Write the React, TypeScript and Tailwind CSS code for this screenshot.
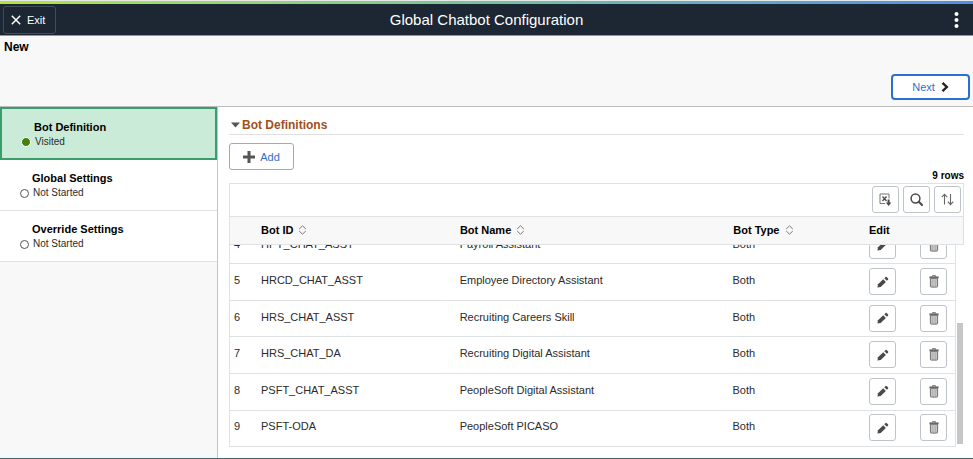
import React from "react";

const steps = [
  { title: "Bot Definition", status: "Visited", active: true },
  { title: "Global Settings", status: "Not Started", active: false },
  { title: "Override Settings", status: "Not Started", active: false },
];

const bots = [
  { row: 4, id: "HPY_CHAT_ASST", name: "Payroll Assistant", type: "Both" },
  { row: 5, id: "HRCD_CHAT_ASST", name: "Employee Directory Assistant", type: "Both" },
  { row: 6, id: "HRS_CHAT_ASST", name: "Recruiting Careers Skill", type: "Both" },
  { row: 7, id: "HRS_CHAT_DA", name: "Recruiting Digital Assistant", type: "Both" },
  { row: 8, id: "PSFT_CHAT_ASST", name: "PeopleSoft Digital Assistant", type: "Both" },
  { row: 9, id: "PSFT-ODA", name: "PeopleSoft PICASO", type: "Both" },
];

function PencilIcon() {
  return (
    <svg width="12" height="12" viewBox="0 0 12 12" fill="#4a4a4a" aria-hidden="true">
      <path d="M.4 11.600 1 8.300 6.200 3.200l2.700 2.700L3.700 11z" />
      <path d="M7.300 2.200 8.600.9q.5-.4 1 0l1.500 1.500q.4.5 0 1L9.900 4.800z" />
    </svg>
  );
}

function TrashIcon() {
  return (
    <svg width="10" height="13" viewBox="0 0 10 13" aria-hidden="true">
      <path d="M3.500 1.500V.7h3v.8" fill="none" stroke="#666" />
      <path d="M.4 1.400h9.200v1.900H.4z" fill="#666" />
      <path d="M1.400 3.300h7.200v8q0 .8-.8.8H2.200q-.8 0-.8-.8z" fill="#c4c4c4" stroke="#707070" />
      <path d="M3.700 4.500v6.500M6.300 4.500v6.500" stroke="#b0b0b0" />
    </svg>
  );
}

function DownloadIcon() {
  return (
    <svg width="13" height="14" viewBox="0 0 13 14" fill="none" aria-hidden="true">
      <path d="M6 10.500H1V1h9v4.500" stroke="#777" />
      <path d="m3.500 3.500 4 4.500M7.500 3.500l-4 4.500" stroke="#4a4a4a" strokeWidth="1.300" />
      <path d="M9.600 6.500v4" stroke="#4a4a4a" strokeWidth="2" />
      <path d="M6.800 9.500h5.600L9.600 13z" fill="#4a4a4a" />
    </svg>
  );
}

function SearchIcon() {
  return (
    <svg width="13" height="13" viewBox="0 0 13 13" fill="none" stroke="#4a4a4a" aria-hidden="true">
      <circle cx="5.500" cy="5.500" r="4.400" strokeWidth="1.500" />
      <path d="m8.800 8.800 3.200 3.200" strokeWidth="2" strokeLinecap="round" />
    </svg>
  );
}

function SortIcon() {
  return (
    <svg width="13" height="13" viewBox="0 0 13 13" fill="none" stroke="#666" strokeWidth="1.100" aria-hidden="true">
      <path d="M3.500 11.500V1.200M.8 4.200l2.700-3 2.700 3M9.500 1v10.500M6.800 8.700l2.700 3 2.700-3" />
    </svg>
  );
}

function HeaderSort({ label }: { label: string }) {
  return (
    <button type="button" className="flex items-center gap-[5px] font-bold">
      {label}
      <svg width="9" height="10" viewBox="0 0 9 10" fill="none" stroke="#777" aria-hidden="true">
        <path d="M1.200 4 4.500.8 7.800 4M1.200 6l3.300 3.200L7.800 6" />
      </svg>
    </button>
  );
}

function IconButton({ label, children }: { label: string; children: React.ReactNode }) {
  return (
    <button
      type="button"
      aria-label={label}
      className="flex size-[27px] items-center justify-center rounded-[3px] border border-[#bfc4ca] bg-white"
    >
      {children}
    </button>
  );
}

function Columns() {
  return (
    <colgroup>
      <col className="w-[31px]" />
      <col className="w-[27.4%]" />
      <col />
      <col className="w-[18.7%]" />
      <col className="w-[52px]" />
      <col className="w-[35px]" />
    </colgroup>
  );
}

export default function App() {
  return (
    <div className="flex min-h-screen flex-col border-b border-[#47636a] bg-white font-['Liberation_Sans',Arial,sans-serif] text-[11px] leading-4 text-[#2b2b2b]">
      <div className="h-1 border-t border-[#e8e8e8] bg-linear-to-r from-[#b0e636] via-[#76c39b] to-[#4a90ec]" />
      <header className="grid h-8 grid-cols-[1fr_auto_1fr] items-center border-b border-[#8f979d] bg-[#1c2733] px-[3px] text-white">
        <button
          type="button"
          className="flex h-7 w-[53px] items-center gap-[6px] rounded-[3px] border border-[#434d58] pl-[7px]"
        >
          <svg width="10" height="10" viewBox="0 0 10 10" stroke="white" strokeWidth="1.500" aria-hidden="true">
            <path d="m.8.8 8.400 8.400M9.200.8.8 9.200" />
          </svg>
          Exit
        </button>
        <h1 className="text-[15px] leading-5">Global Chatbot Configuration</h1>
        <button type="button" aria-label="Actions" className="justify-self-end px-[11px]">
          <svg width="5" height="16" viewBox="0 0 5 16" fill="white" aria-hidden="true">
            <circle cx="2.500" cy="2" r="2" />
            <circle cx="2.500" cy="8" r="2" />
            <circle cx="2.500" cy="14" r="2" />
          </svg>
        </button>
      </header>

      <div className="flex h-[71px] flex-col justify-between border-b border-[#bcbcbc] bg-[#f8f8f8] pt-[3px] pr-[3px] pb-[6px] pl-1">
        <h2 className="text-xs leading-4 font-bold text-black">New</h2>
        <button
          type="button"
          className="flex h-[26px] w-[79px] items-center justify-center gap-[6px] self-end rounded-[4px] border-2 border-[#2a70cf] bg-white text-[#2f6fca]"
        >
          Next
          <svg width="8" height="10" viewBox="0 0 8 10" fill="none" stroke="#222" strokeWidth="2.400" aria-hidden="true">
            <path d="m1.500.9 4.300 4.100-4.300 4.100" />
          </svg>
        </button>
      </div>

      <div className="flex flex-1">
        <nav className="w-[218px] shrink-0 border-r border-[#c4c4c4] bg-[#f8f8f8]">
          <ol>
            {steps.map((step) => (
              <li key={step.title}>
                <a
                  href="#"
                  aria-current={step.active ? "step" : undefined}
                  className={
                    step.active
                      ? "flex h-[53px] flex-col justify-center border-2 border-[#3b9d6b] bg-[#c9ebd7] pt-px pl-[19px]"
                      : "flex h-[51px] flex-col justify-center border-b border-[#dfe1e4] bg-white pt-px pl-[20px]"
                  }
                >
                  <span className={step.active ? "pl-[13px] leading-[15px] font-bold text-black" : "pl-3 leading-[15px] font-bold text-black"}>
                    {step.title}
                  </span>
                  <span className="flex items-center gap-1 text-[10px] leading-[14px]">
                    {step.active ? (
                      <i className="size-[10px] rounded-full border border-white bg-[#42810e]" />
                    ) : (
                      <i className="size-[9px] rounded-full border border-[#555] bg-white" />
                    )}
                    {step.status}
                  </span>
                </a>
              </li>
            ))}
          </ol>
        </nav>

        <main className="min-w-0 flex-1 pt-[10px] pr-[9px] pl-[11px]">
          <h2 className="border-b border-[#e0e0e0] pb-px text-xs leading-4 font-bold text-[#a0501c]">
            <button type="button" aria-expanded="true" className="flex items-center gap-[2px] pl-[2px]">
              <svg width="9" height="6" viewBox="0 0 9 6" fill="#555" aria-hidden="true">
                <path d="M0 .5h9L4.500 5.500z" />
              </svg>
              Bot Definitions
            </button>
          </h2>
          <button
            type="button"
            className="mt-2 flex h-[27px] w-[65px] items-center justify-center gap-[5px] rounded-[3px] border border-[#86aee6] text-[#2f6fca]"
          >
            <svg width="12" height="12" viewBox="0 0 12 12" stroke="#555" strokeWidth="3" aria-hidden="true">
              <path d="M6 0v12M0 6h12" />
            </svg>
            Add
          </button>
          <p className="pb-px text-right text-[10px] leading-3 font-bold text-black">9 rows</p>

          <section aria-label="Bot Definitions">
            <div className="flex h-[33px] items-start justify-end gap-1 border border-b-0 border-[#dfe2e5] pt-[2px] pr-[2px]">
              <IconButton label="Download"><DownloadIcon /></IconButton>
              <IconButton label="Find"><SearchIcon /></IconButton>
              <IconButton label="Sort"><SortIcon /></IconButton>
            </div>
            <div className="border border-[#dfe2e5] bg-[#f8f8f8] pr-[7px]">
              <table className="h-[27px] w-full table-fixed text-left text-black">
                <Columns />
                <thead>
                  <tr>
                    <th aria-label="Row" />
                    <th className="pb-[2px]"><HeaderSort label="Bot ID" /></th>
                    <th className="pb-[2px]"><HeaderSort label="Bot Name" /></th>
                    <th className="pb-[2px]"><HeaderSort label="Bot Type" /></th>
                    <th className="pb-[2px]">Edit</th>
                    <th aria-label="Delete" />
                  </tr>
                </thead>
              </table>
            </div>
            <div className="flex h-[202px]">
              <div className="flex flex-1 flex-col justify-end overflow-hidden border-r border-b border-l border-[#dfe2e5]">
                <table className="h-[218px] w-full shrink-0 table-fixed">
                  <Columns />
                  <tbody>
                    {bots.map((bot) => (
                      <tr key={bot.row} className="border-b border-[#dfe2e5] last:border-b-0">
                        <td className="pb-1 pl-1">{bot.row}</td>
                        <td className="pb-1">{bot.id}</td>
                        <td className="pb-1">{bot.name}</td>
                        <td className="pb-1">{bot.type}</td>
                        <td className="pb-px pl-px"><IconButton label={"Edit " + bot.id}><PencilIcon /></IconButton></td>
                        <td className="pb-px"><IconButton label={"Delete " + bot.id}><TrashIcon /></IconButton></td>
                      </tr>
                    ))}
                  </tbody>
                </table>
              </div>
              <div className="flex w-2 flex-col justify-end px-px pb-[3px]" aria-hidden="true">
                <div className="h-[121px] bg-[#c6c6c6]" />
              </div>
            </div>
          </section>
        </main>
      </div>
    </div>
  );
}
